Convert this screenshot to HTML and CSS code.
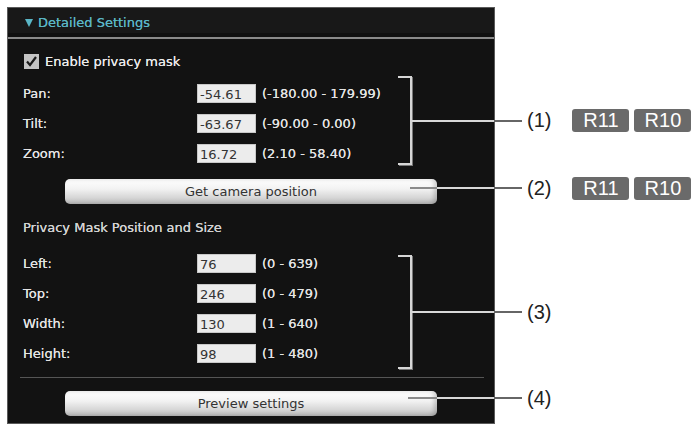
FILE: index.html
```html
<!DOCTYPE html>
<html lang="en">
<head>
<meta charset="utf-8">
<title>Detailed Settings</title>
<link rel="stylesheet" href="styles.css">
</head>
<body>
<div class="page">
  <div class="panel">
    <div class="panel-head"><span class="caret"></span>Detailed Settings</div>
    <div class="panel-body">
      <div class="check-row">
        <span class="checkbox"><svg viewBox="0 0 15 15" width="15" height="15"><path d="M3 7.5 L6 11 L12 3" fill="none" stroke="#1a1a1a" stroke-width="2.2"/></svg></span>
        <span>Enable privacy mask</span>
      </div>
      <div class="fields">
        <div class="field"><span class="label">Pan:</span><span class="input">-54.61</span><span class="range">(-180.00 - 179.99)</span></div>
        <div class="field"><span class="label">Tilt:</span><span class="input">-63.67</span><span class="range">(-90.00 - 0.00)</span></div>
        <div class="field"><span class="label">Zoom:</span><span class="input">16.72</span><span class="range">(2.10 - 58.40)</span></div>
      </div>
      <button class="btn btn-camera">Get camera position</button>
      <div class="section-title">Privacy Mask Position and Size</div>
      <div class="fields fields-mask">
        <div class="field"><span class="label">Left:</span><span class="input">76</span><span class="range">(0 - 639)</span></div>
        <div class="field"><span class="label">Top:</span><span class="input">246</span><span class="range">(0 - 479)</span></div>
        <div class="field"><span class="label">Width:</span><span class="input">130</span><span class="range">(1 - 640)</span></div>
        <div class="field"><span class="label">Height:</span><span class="input">98</span><span class="range">(1 - 480)</span></div>
      </div>
      <div class="sep"></div>
      <button class="btn btn-preview">Preview settings</button>
    </div>
  </div>

  <div class="callout c1">
    <span class="bracket b1"></span>
    <span class="leader l1"></span>
    <span class="num">(1)</span>
    <span class="badges"><span class="badge">R11</span><span class="badge">R10</span></span>
  </div>
  <div class="callout c2">
    <span class="leader l2"></span>
    <span class="num">(2)</span>
    <span class="badges"><span class="badge">R11</span><span class="badge">R10</span></span>
  </div>
  <div class="callout c3">
    <span class="bracket b3"></span>
    <span class="leader l1"></span>
    <span class="num">(3)</span>
  </div>
  <div class="callout c4">
    <span class="leader l4"></span>
    <span class="num">(4)</span>
  </div>
</div>
</body>
</html>
```

FILE: styles.css
```css
* { box-sizing: border-box; }

html, body {
  margin: 0;
  padding: 0;
  background: #ffffff;
}

.page {
  position: relative;
  width: 698px;
  height: 429px;
  padding: 7px 0 0 7px;
  font-family: "DejaVu Sans", Verdana, sans-serif;
  font-size: 13px;
}

.panel {
  width: 488px;
  border: 1px solid #5a5a5a;
  background: #121212;
}

.panel-head {
  height: 31px;
  display: flex;
  align-items: center;
  padding-left: 17px;
  background: #181818;
  color: #5ab6c6;
  border-bottom: 2px solid #8a8a8a;
  box-shadow: inset 0 -4px 0 #101010;
  text-shadow: 0 0 0.6px #5ab6c6;
}

.caret {
  width: 0;
  height: 0;
  border-left: 4px solid transparent;
  border-right: 4px solid transparent;
  border-top: 8px solid #5ab6c6;
  margin-right: 5px;
}

.panel-body {
  padding: 7px 0 7px 0;
  color: #e4e4e4;
  text-shadow: 0 0 0.6px #e4e4e4;
}

.check-row {
  height: 30px;
  display: flex;
  align-items: center;
  padding-left: 16px;
  color: #ececec;
}

.checkbox {
  width: 15px;
  height: 15px;
  background: #c4c4c4;
  margin-right: 6px;
  display: flex;
}

.fields {
  margin-top: 2px;
}

.fields-mask {
  margin-top: 10px;
}

.field {
  height: 30px;
  display: flex;
  align-items: center;
  padding-left: 15px;
}

.label {
  width: 174px;
}

.input {
  width: 59px;
  height: 19px;
  line-height: 19px;
  background: #ececec;
  color: #333;
  padding-left: 2px;
  border: 1px solid #c8c8c8;
  text-shadow: none;
}

.range {
  margin-left: 6px;
}

.btn {
  display: block;
  width: 372px;
  height: 25px;
  margin: 11px auto 0;
  padding: 0;
  border: none;
  border-radius: 5px;
  background: linear-gradient(to bottom, #ffffff 0%, #f2f2f2 40%, #d6d6d6 75%, #b8b8b8 100%);
  box-shadow: inset -3px 0 4px rgba(0, 0, 0, 0.18);
  font-family: "DejaVu Sans", Verdana, sans-serif;
  font-size: 13px;
  color: #333;
  text-shadow: none;
}

.btn-preview {
  margin-top: 13px;
}

.section-title {
  margin-top: 14px;
  height: 20px;
  line-height: 20px;
  padding-left: 15px;
  color: #d2d2d2;
}

.sep {
  margin: 9px 10px 0 12px;
  border-top: 1px solid #555;
}

/* Callout annotations */
.callout {
  position: absolute;
  display: flex;
  align-items: center;
}

.c1 { left: 398px; top: 76px; }
.c2 { left: 410px; top: 176px; height: 24px; }
.c3 { left: 398px; top: 255px; }
.c4 { left: 408px; top: 386px; height: 24px; }

.bracket {
  width: 14px;
  border: 2px solid #d6d6d6;
  border-left: none;
  box-shadow: 1px 1px 0 #777;
}

.b1 { height: 89px; }
.b3 { height: 114px; }

.leader {
  height: 2px;
}

.l1 {
  width: 110px;
  background: linear-gradient(to right, #d8d8d8 0, #d8d8d8 82px, #666 82px, #666 100%);
}

.l2 {
  width: 112px;
  background: linear-gradient(to right, #8a8a8a 0, #8a8a8a 27px, #d8d8d8 27px, #d8d8d8 84px, #666 84px, #666 100%);
}

.l4 {
  width: 114px;
  background: linear-gradient(to right, #8a8a8a 0, #8a8a8a 29px, #d8d8d8 29px, #d8d8d8 86px, #666 86px, #666 100%);
}

.num {
  margin-left: 5px;
  font-family: "Liberation Sans", Arial, sans-serif;
  font-size: 20px;
  color: #222;
}

.badges {
  display: flex;
  gap: 5px;
  margin-left: 21px;
}

.badge {
  width: 57px;
  height: 23px;
  line-height: 23px;
  text-align: center;
  background: #6a6a6a;
  border-radius: 3px;
  color: #ffffff;
  font-family: "Liberation Sans", Arial, sans-serif;
  font-size: 20px;
}
```
